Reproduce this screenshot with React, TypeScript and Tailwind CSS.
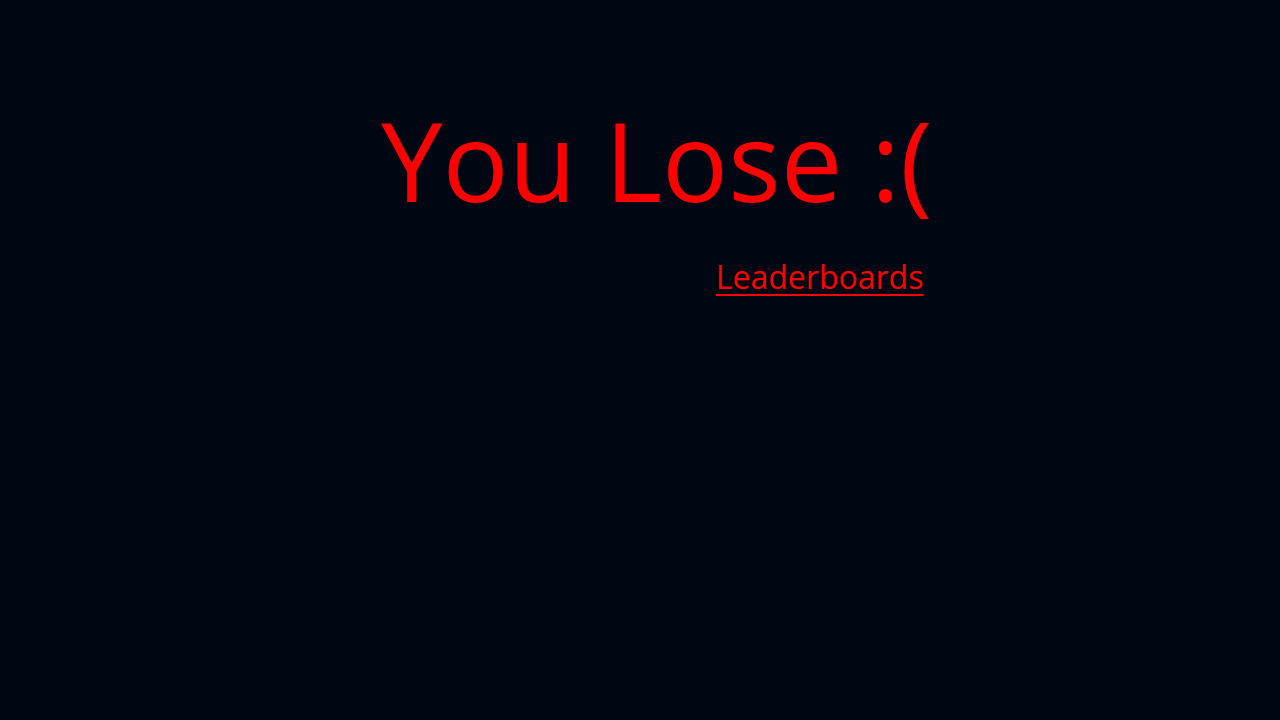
export default function App() {
  return (
    <div className="min-h-screen w-full bg-[#000612] font-['Open_Sans',sans-serif] text-[#ff0000]">
      <div className="pl-[381px] pt-[104px]">
        <div className="inline-flex flex-col items-end">
          <h1 className="text-[110px] leading-none font-normal whitespace-nowrap">You Lose :(</h1>
          <a href="#" className="mt-[47px] mr-[9px] text-[32px] leading-none underline decoration-[2px] underline-offset-[5px]">
            Leaderboards
          </a>
        </div>
      </div>
    </div>
  );
}
